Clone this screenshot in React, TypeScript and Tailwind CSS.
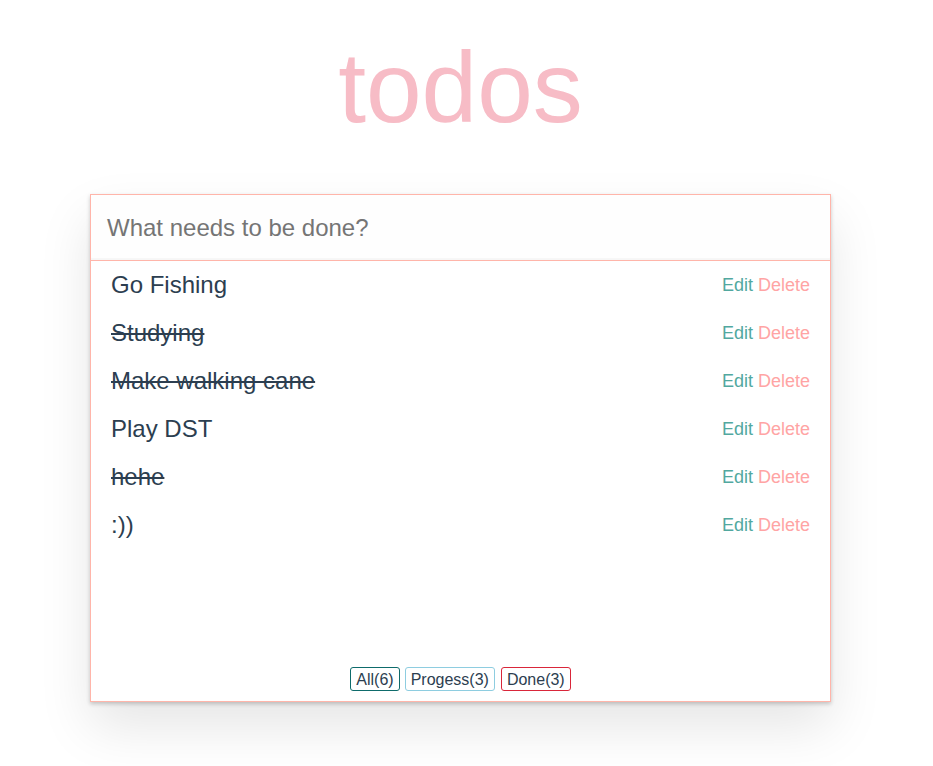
import React from "react";

const items = [
  { text: "Go Fishing", done: false },
  { text: "Studying", done: true },
  { text: "Make walking cane", done: true },
  { text: "Play DST", done: false },
  { text: "hehe", done: true },
  { text: ":))", done: false },
];

export default function App() {
  return (
    <div
      className="min-h-[766px] w-[921px] bg-white flex flex-col items-center"
      style={{ fontFamily: '"Liberation Sans", Arial, sans-serif' }}
    >
      <h1 className="mt-[30px] text-[100px] leading-[115px] font-normal text-[#f7bcc6] text-center">
        todos
      </h1>
      <div className="mt-[49px] w-[741px] h-[508px] border border-[#ffb5aa] bg-white flex flex-col shadow-[0_2px_4px_rgba(0,0,0,0.2),0_25px_50px_0_rgba(0,0,0,0.1)]">
        <div className="h-[66px] shrink-0 border-b border-[#ffb5aa] flex items-center pl-4 shadow-[inset_0_-2px_1px_rgba(0,0,0,0.03)] bg-[#fefefe]">
          <span className="text-[24px] text-[#757575]">What needs to be done?</span>
        </div>
        <div className="flex flex-col">
          {items.map((it) => (
            <div key={it.text} className="h-[48px] flex items-center justify-between px-5">
              <span
                className={
                  "text-[24px] text-[#2c3e50] " +
                  (it.done ? "line-through decoration-2" : "")
                }
              >
                {it.text}
              </span>
              <span className="text-[18px]">
                <span className="text-[#52a89f]">Edit</span>{" "}
                <span className="text-[#ffa4a4]">Delete</span>
              </span>
            </div>
          ))}
        </div>
        <div className="mt-auto pb-[10px] flex justify-center gap-[5px] text-[16px] text-[#2c3e50]">
          <span className="h-[24px] pt-[1px] px-[5px] leading-[21px] border border-[#0e6b6b] rounded-[3px]">All(6)</span>
          <span className="h-[24px] pt-[1px] px-[5px] leading-[21px] border border-[#8ecde0] rounded-[3px]">Progess(3)</span>
          <span className="ml-[1px] h-[24px] pt-[1px] px-[5px] leading-[21px] border border-[#d9263a] rounded-[3px]">Done(3)</span>
        </div>
      </div>
    </div>
  );
}
